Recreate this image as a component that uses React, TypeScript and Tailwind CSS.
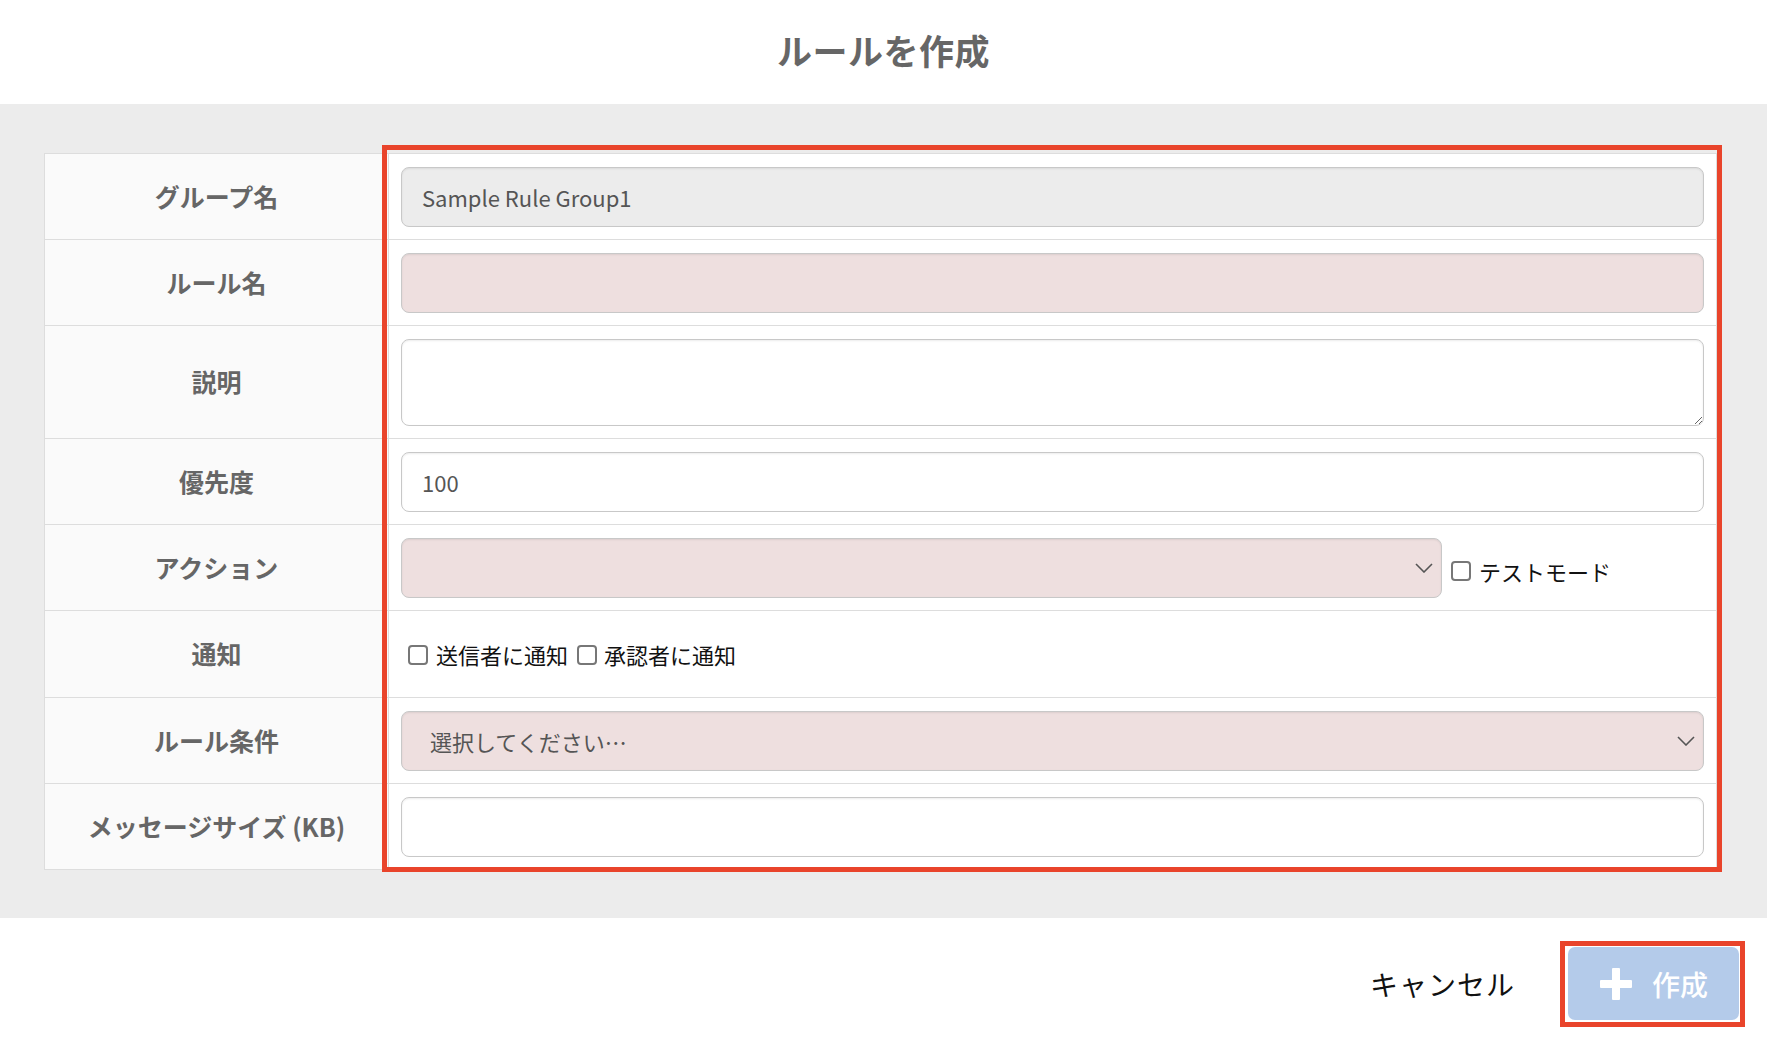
import React from 'react';

// 入力欄の共通スタイル（幅は呼び出し側で指定）
const inputBase =
  'h-[60px] rounded-[8px] border border-[#c8c8c8] shadow-[inset_0_1px_2px_rgba(0,0,0,0.08)] px-[20px] flex items-center text-[22px] text-[#555]';

function Chevron() {
  return (
    <svg width="18" height="10" viewBox="0 0 18 10" className="shrink-0">
      <polyline points="1,1 9,9 17,1" fill="none" stroke="#555" strokeWidth="1.6" />
    </svg>
  );
}

function CheckBox() {
  return (
    <span className="inline-block w-[20px] h-[20px] rounded-[4px] border-[2px] border-[#777] bg-white shrink-0" />
  );
}

function Row({ label, children, first }: { label: string; children: React.ReactNode; first?: boolean }) {
  return (
    <div className={`flex ${first ? '' : 'border-t border-[#dddddd]'}`}>
      <div className="w-[344px] shrink-0 bg-[#fafafa] border-r border-[#dddddd] flex items-center justify-center text-[25px] font-bold text-[#666]">
        {label}
      </div>
      <div className="flex-1 min-w-0 bg-white pl-[12px] pr-[12px] pt-[13px] pb-[12px] flex items-center">
        {children}
      </div>
    </div>
  );
}

export default function App() {
  return (
    <div className="w-full min-h-[1050px] bg-white font-['Noto_Sans_CJK_JP','Noto_Sans',sans-serif]">
      {/* ヘッダー */}
      <div className="h-[104px] flex items-center justify-center pb-[4px]">
        <h1 className="text-[35px] font-bold text-[#666] tracking-[0.5px]">ルールを作成</h1>
      </div>

      {/* フォーム */}
      <div className="bg-[#ececec] pt-[49px] pb-[48px] pl-[44px] pr-[50px]">
        <div className="relative border border-[#dddddd]">
          <Row label="グループ名" first>
            <div className={`${inputBase} w-full bg-[#ececec]`}>Sample Rule Group1</div>
          </Row>
          <Row label="ルール名">
            <div className={`${inputBase} w-full bg-[#eedfdf]`} />
          </Row>
          <Row label="説明">
            <textarea
              className="h-[87px] w-full rounded-[8px] border border-[#c8c8c8] shadow-[inset_0_1px_2px_rgba(0,0,0,0.08)] bg-white block"
              readOnly
            />
          </Row>
          <Row label="優先度">
            <div className={`${inputBase} w-full bg-white`}>100</div>
          </Row>
          <Row label="アクション">
            <div className={`${inputBase} w-[1041px] shrink-0 bg-[#eedfdf] justify-end pr-[8px]`}>
              <Chevron />
            </div>
            <div className="flex items-center ml-[9px] mt-[6px] gap-[8px] text-[22px] text-[#111] whitespace-nowrap">
              <CheckBox />
              <span>テストモード</span>
            </div>
          </Row>
          <Row label="通知">
            <div className="h-[61px] flex items-center ml-[7px] text-[22px] text-[#111] whitespace-nowrap">
              <CheckBox />
              <span className="ml-[8px]">送信者に通知</span>
              <span className="ml-[9px] flex">
                <CheckBox />
              </span>
              <span className="ml-[7px]">承認者に通知</span>
            </div>
          </Row>
          <Row label="ルール条件">
            <div className={`${inputBase} w-full bg-[#eedfdf] justify-between pl-[28px] pr-[8px]`}>
              <span>選択してください…</span>
              <Chevron />
            </div>
          </Row>
          <Row label="メッセージサイズ (KB)">
            <div className={`${inputBase} w-full bg-white`} />
          </Row>

          {/* 強調枠 */}
          <div className="pointer-events-none absolute left-[337px] top-[-9px] right-[-6px] bottom-[-3px] border-[5px] border-[#e9442b]" />
        </div>
      </div>

      {/* フッター */}
      <div className="h-[132px] flex items-center justify-end pr-[22px] gap-[45px]">
        <span className="text-[28px] text-[#111] tracking-[1px]">キャンセル</span>
        <div className="border-[5px] border-[#e9442b] pl-[3px] pr-[1px] pt-[1px] pb-[2px]">
          <button className="h-[73px] w-[171px] rounded-[7px] bg-[#b4cbea] flex items-center pl-[32px] gap-[20px] text-white text-[28px] font-medium">
            <svg width="32" height="32" viewBox="0 0 32 32">
              <rect x="12" y="0" width="8" height="32" rx="1" fill="white" />
              <rect x="0" y="12" width="32" height="8" rx="1" fill="white" />
            </svg>
            <span>作成</span>
          </button>
        </div>
      </div>
    </div>
  );
}
